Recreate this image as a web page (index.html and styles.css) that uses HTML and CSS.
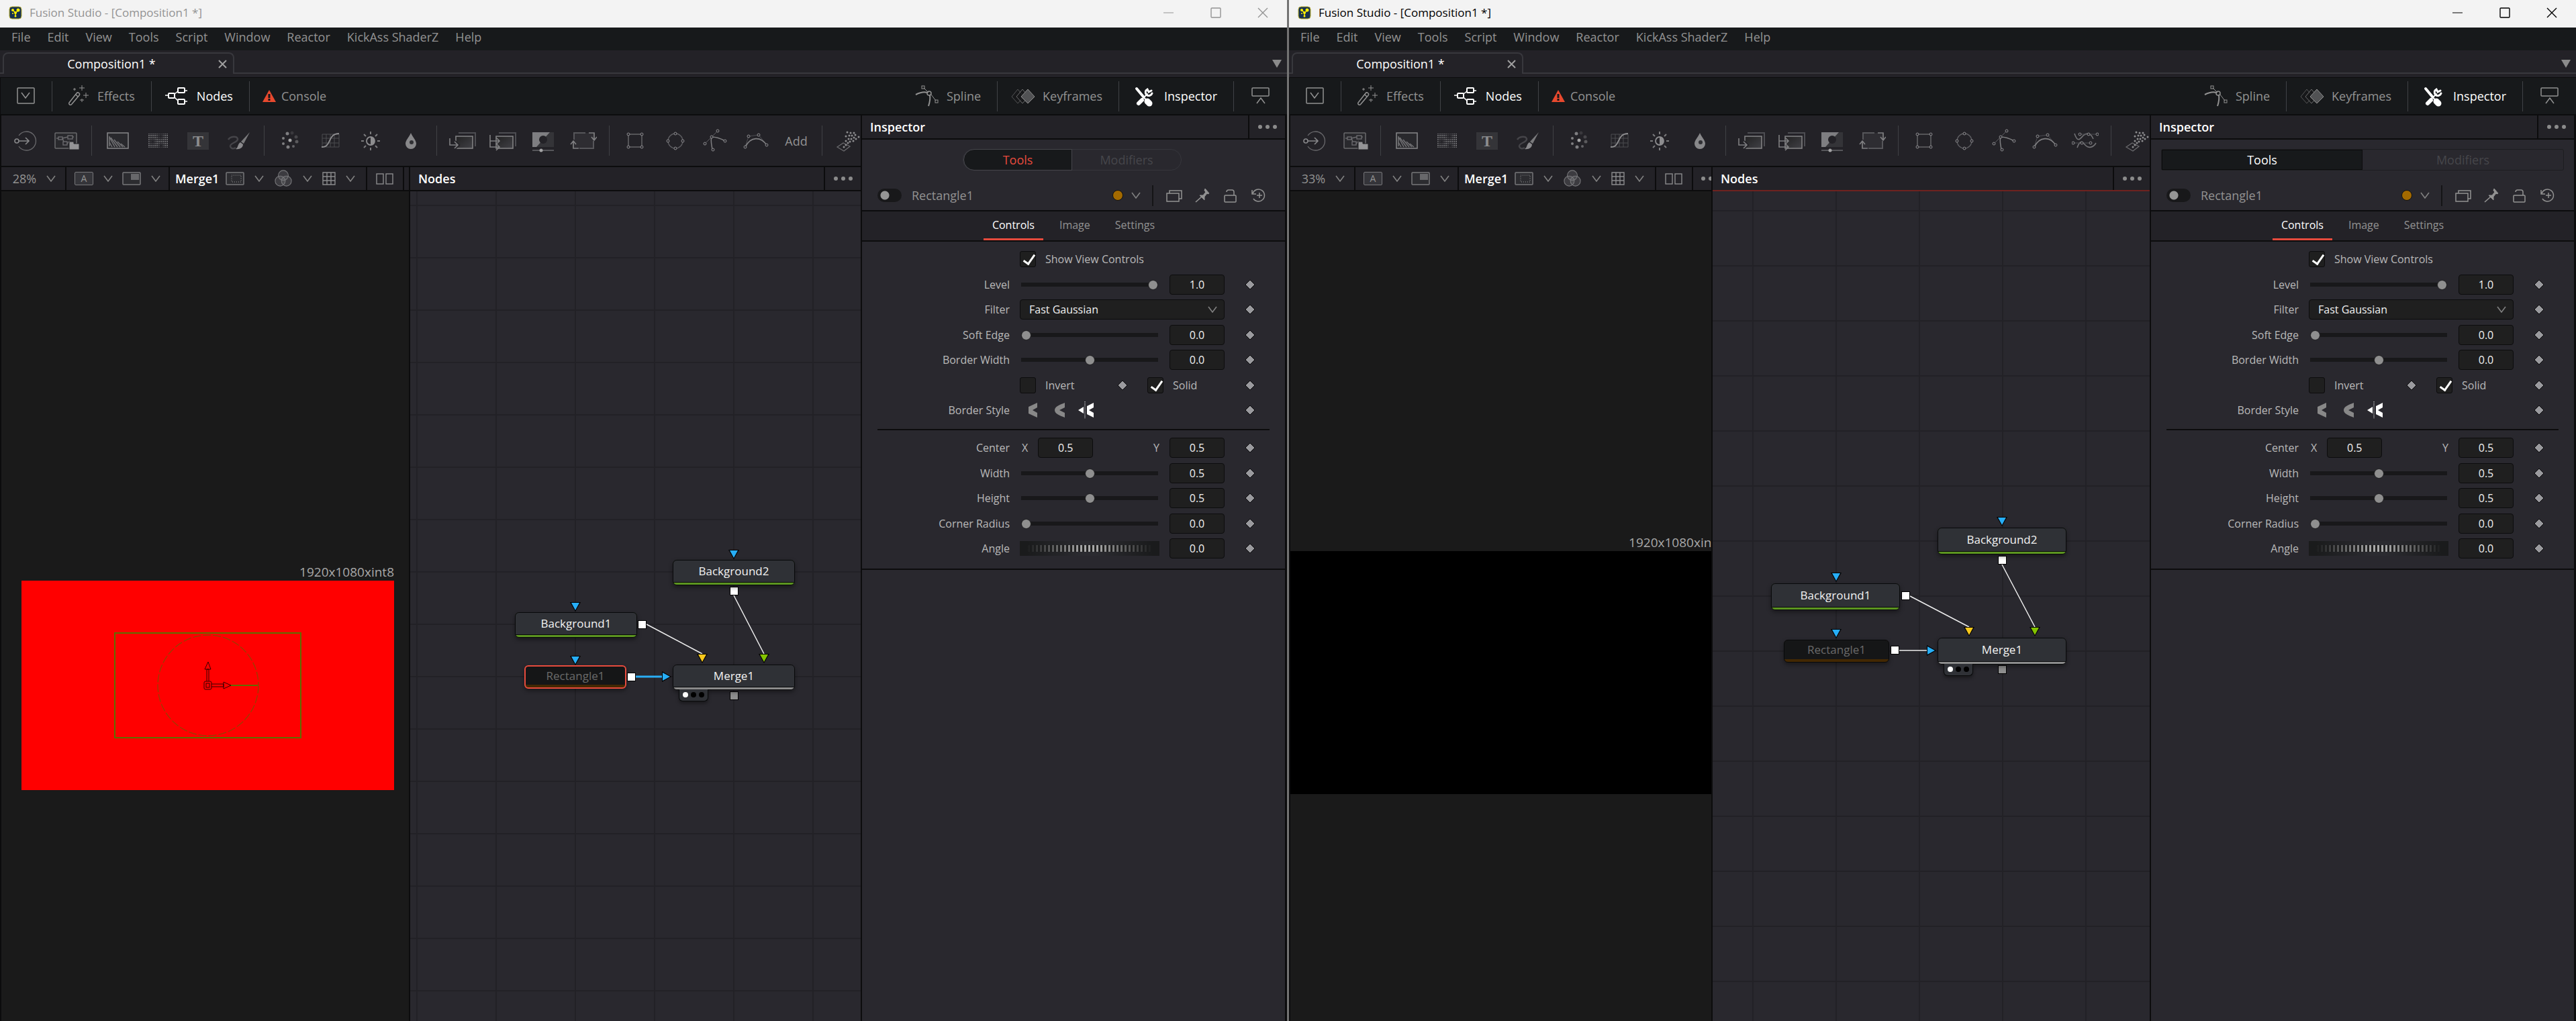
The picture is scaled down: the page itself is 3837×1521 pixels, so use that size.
FILE: index.html
```html
<!DOCTYPE html>
<html lang="en">
<head>
    <meta charset="UTF-8">
    <meta name="viewport" content="width=device-width, initial-scale=1.0">
    <title>Fusion Studio</title>
    <link rel="stylesheet" href="styles.css">
</head>
<body>
    <!-- icon sprite -->
    <svg class="sprite" aria-hidden="true">
        <defs>
            <linearGradient id="fade" x1="0" y1="0" x2="1" y2="1"><stop offset="0" stop-color="#222"/><stop offset="1" stop-color="#47474c"/></linearGradient>
            <pattern id="weave" width="3" height="3" patternUnits="userSpaceOnUse"><rect width="2" height="2" fill="#77777a"/></pattern>
            <radialGradient id="blob"><stop offset="0" stop-color="#232227"/><stop offset="1" stop-color="#232227" stop-opacity="0"/></radialGradient>
        </defs>
        <symbol id="i-app" viewBox="0 0 20 20"><rect x="1" y="1" width="18" height="18" rx="4" fill="#17324f" stroke="#b8ad2f"/><path d="M6 6l4 4 5-4M10 10v5" fill="none" stroke="#f4e800" stroke-width="1.5"/><g fill="#fff100"><circle cx="6" cy="6" r="2"/><circle cx="14" cy="6" r="2.5"/><circle cx="10" cy="10" r="2"/><circle cx="10" cy="15" r="1.5"/><circle cx="6" cy="11" r="1"/></g></symbol>
        <symbol id="i-min" viewBox="0 0 16 16"><path d="M0 8h15" stroke="currentColor" stroke-width="1"/></symbol>
        <symbol id="i-max" viewBox="0 0 16 16"><rect x="1" y="1" width="14" height="14" rx="1" fill="none" stroke="currentColor" stroke-width="1.4"/></symbol>
        <symbol id="i-close" viewBox="0 0 16 16"><path d="M1 1l14 14M15 1L1 15" stroke="currentColor" stroke-width="1.4"/></symbol>
        <symbol id="i-tab-close" viewBox="0 0 13 13"><path d="M1 1l11 11M12 1L1 12" stroke="currentColor" stroke-width="2"/></symbol>
        <symbol id="i-tri" viewBox="0 0 14 12"><path d="M0 0h14L7 12z" fill="currentColor"/></symbol>
        <symbol id="i-chev" viewBox="0 0 14 10"><path d="M1 1l6 8 6-8" fill="none" stroke="currentColor" stroke-width="1.6"/></symbol>
        <symbol id="i-dots" viewBox="0 0 28 8"><g fill="currentColor"><circle cx="3" cy="4" r="3"/><circle cx="14" cy="4" r="3"/><circle cx="25" cy="4" r="3"/></g></symbol>
        <symbol id="i-key" viewBox="0 0 16 16"><path d="M8 1l7 7-7 7-7-7z" fill="#9a9a9e" stroke="#0d0d0e" stroke-width="1"/></symbol>

        <symbol id="i-panel" viewBox="0 0 36 32"><rect x="5" y="4" width="25" height="23" rx="1" fill="none" stroke="currentColor" stroke-width="1.5"/><path d="M11 11l6 8 6-8" fill="none" stroke="currentColor" stroke-width="1.5"/></symbol>
        <symbol id="i-wand" viewBox="0 0 36 32"><path d="M5 26L16 12a2 2 0 0 1 4 3L9 28a2 2 0 0 1-4-2zM15 14l3 3" fill="none" stroke="currentColor" stroke-width="1.5"/><path d="M24 0v8M20 4h8M30 11v8M26 15h8M13 4v4M11 6h4M24 20v5M21 22h6" stroke="currentColor"/></symbol>
        <symbol id="i-nodes" viewBox="0 0 36 32"><g fill="none" stroke="currentColor" stroke-width="2"><rect x="5" y="12" width="9" height="7" rx="1"/><rect x="19" y="4" width="10" height="7" rx="1"/><rect x="19" y="21" width="10" height="7" rx="1"/><path d="M0 15h5M29 8h4M29 24h4M14 13l5-4M14 18l5 5" stroke-width="1.5"/></g></symbol>
        <symbol id="i-warn" viewBox="0 0 20 20"><path d="M10 1l10 18H0z" fill="#e8492e"/><path d="M10 7v6M10 14v3" stroke="#17181a" stroke-width="3"/></symbol>
        <symbol id="i-spline" viewBox="0 0 36 32"><g fill="none" stroke="currentColor"><path d="M1 14C7 11 12 9 18 11" stroke-width="2"/><path d="M20 31c2-6 3-10 2-16" stroke-width="2"/><path d="M13 4l7 7M24 14l7 9"/><rect x="10" y="1" width="4" height="4"/><rect x="30" y="22" width="4" height="4"/><circle cx="21" cy="12" r="3" stroke-width="1.5"/></g></symbol>
        <symbol id="i-keyframes" viewBox="0 0 36 32"><g fill="#17181a" stroke="currentColor"><path d="M10 6l9 11-9 10L1 17z" opacity=".5"/><path d="M17 6l9 11-9 10L8 17z" opacity=".7"/></g><path d="M25 6l10 11-10 10-10-10z" fill="#515254" stroke="currentColor"/></symbol>
        <symbol id="i-inspector" viewBox="0 0 36 32"><g fill="none" stroke="currentColor" stroke-linecap="round"><path d="M6 5l10 12" stroke-width="4"/><path d="M9 27l5-5" stroke-width="6"/><path d="M14 21l8-8" stroke-width="2"/><path d="M28 8l-4 2-2-4a5 5 0 1 0 7 6" stroke-width="3"/><path d="M22 24l3 3" stroke-width="9"/><path d="M16 17l5 6" stroke-width="2"/></g></symbol>
        <symbol id="i-float" viewBox="0 0 36 32"><rect x="5" y="4" width="25" height="12" rx="1" fill="none" stroke="currentColor" stroke-width="1.5"/><path d="M12 27l6-8 6 8" fill="none" stroke="currentColor" stroke-width="1.5"/></symbol>

        <symbol id="t-loader" viewBox="0 0 40 36"><g fill="none" stroke="#77777a" stroke-width="1.3"><path d="M10 10a14 14 0 1 1 0 16"/></g><g fill="none" stroke="#9a9a9c" stroke-width="1.6"><circle cx="7" cy="18" r="3"/><path d="M10 18h15M20 13l5 5-5 5"/></g></symbol>
        <symbol id="t-saver" viewBox="0 0 40 36"><rect x="4" y="6" width="32" height="23" rx="1" fill="#2b2b2f" stroke="#77777a" stroke-width="1.5"/><g fill="none" stroke="#77777a" stroke-width="1.4"><rect x="9" y="12" width="6" height="4"/><rect x="23" y="10" width="7" height="5"/><rect x="16" y="19" width="6" height="5"/><path d="M6 14h3M15 14l2 5M15 14l8-2M22 22l4-4M30 12h2"/></g><path d="M25 19h7v3h8v9H25z" fill="#a8a8aa" stroke="#232227"/></symbol>
        <symbol id="t-bg" viewBox="0 0 40 36"><rect x="5" y="6" width="31" height="23" fill="#2b2b2f" stroke="#9a9a9c" stroke-width="1.5"/><path d="M8 26V11M8 12l8 15M8 20l4 7M10 13l10 14M15 16l9 11M20 19l8 8M25 22l6 5" fill="none" stroke="#808083" stroke-width="1.5"/></symbol>
        <symbol id="t-noise" viewBox="0 0 40 36"><rect x="6" y="7" width="29" height="21" fill="url(#weave)"/><circle cx="24" cy="11" r="7" fill="url(#blob)"/><circle cx="12" cy="19" r="7" fill="url(#blob)"/><circle cx="25" cy="25" r="6" fill="url(#blob)"/></symbol>
        <symbol id="t-paint" viewBox="0 0 40 36"><path d="M5 16c3-5 13-6 14-1 1 5-12 6-11 11 1 4 5 4 8 2" fill="none" stroke="#4b4b4f" stroke-width="2.5"/><path d="M37 5L28 22l-4-3z" fill="#8b8b8d"/><path d="M23 20l4 3c0 5-5 8-11 7 4-2 3-8 7-10z" fill="#9c9c9e"/></symbol>
        <symbol id="t-particles" viewBox="0 0 40 36"><g fill="#8f8f91"><circle cx="20" cy="17" r="2.5" fill="#bbb"/><circle cx="16" cy="7" r="2.5"/><circle cx="10" cy="14" r="2"/><circle cx="10" cy="22" r="2"/><circle cx="17" cy="27" r="2.5"/><circle cx="25" cy="26" r="2" opacity=".7"/><circle cx="30" cy="19" r="2.5" opacity=".6"/><circle cx="29" cy="12" r="2.5" opacity=".4"/><circle cx="23" cy="6" r="2.5" opacity=".25"/></g></symbol>
        <symbol id="t-curve" viewBox="0 0 40 36"><path d="M8 8h25v19H8zM14 8v19M20 8v19M26 8v19M8 14h25M8 21h25" fill="none" stroke="#555559"/><path d="M7 27c16 0 8-20 26-20" fill="none" stroke="#a0a0a2" stroke-width="1.8"/></symbol>
        <symbol id="t-bright" viewBox="0 0 40 36"><circle cx="20" cy="18" r="6" fill="#232227" stroke="#a0a0a2" stroke-width="1.8"/><path d="M20 12a6 6 0 0 1 0 12z" fill="#a0a0a2"/><path d="M20 4v4M20 28v4M30 18h4M27 11l3-3M27 25l3 3M13 11l-3-3M13 25l-3 3M10 18H6" stroke="#8b8b8d" stroke-width="2"/></symbol>
        <symbol id="t-blur" viewBox="0 0 40 36"><path d="M20 6c3 7 8 11 8 16a8 8 0 0 1-16 0c0-5 5-9 8-16z" fill="#9a9a9c"/><circle cx="21" cy="20" r="3" fill="#333337"/></symbol>
        <symbol id="t-merge" viewBox="0 0 40 36"><path d="M14 6h25v20" fill="none" stroke="#55555a" stroke-width="2"/><rect x="10" y="11" width="25" height="18" fill="url(#fade)" stroke="#909092" stroke-width="1.6"/><path d="M1 15v9h12M8 19l5 5-5 5" fill="none" stroke="#232227" stroke-width="5"/><path d="M1 14v10h12M8 19l5 5-5 5" fill="none" stroke="#909092" stroke-width="1.6"/></symbol>
        <symbol id="t-multimerge" viewBox="0 0 40 36"><path d="M14 6h25v20" fill="none" stroke="#55555a" stroke-width="2"/><rect x="10" y="11" width="25" height="18" fill="url(#fade)" stroke="#909092" stroke-width="1.6"/><path d="M1 9v18h14M1 18h14M10 13l5 5-5 5M10 22l5 5-5 5" fill="none" stroke="#909092" stroke-width="1.6"/></symbol>
        <symbol id="t-matte" viewBox="0 0 40 36"><rect x="4" y="5" width="32" height="22" fill="#38383c"/><path d="M4 5h26L10 27H4z" fill="#8f8f91"/><circle cx="20" cy="16" r="6" fill="#232227"/><path d="M4 32h32" stroke="#606064" stroke-width="2"/><circle cx="17" cy="32" r="2.5" fill="#bbb"/></symbol>
        <symbol id="t-transform" viewBox="0 0 40 36"><rect x="6" y="6" width="29" height="23" fill="#303034"/><path d="M6 16V6h17M14 29h21V18" fill="none" stroke="#606064" stroke-width="2"/><path d="M28 6h8v11M32 12l4 5 4-5M13 29H5V18M1 23l4-5 4 5" fill="none" stroke="#909092" stroke-width="1.7"/></symbol>
        <symbol id="t-rect" viewBox="0 0 40 36"><rect x="10" y="8" width="20" height="19" fill="none" stroke="#77777a" stroke-width="1.4"/><g fill="#232227" stroke="#a0a0a2"><circle cx="10" cy="8" r="2"/><circle cx="30" cy="8" r="2"/><circle cx="10" cy="27" r="2"/><circle cx="30" cy="27" r="2"/></g></symbol>
        <symbol id="t-ellipse" viewBox="0 0 40 36"><circle cx="20" cy="18" r="11" fill="none" stroke="#66666a" stroke-width="1.4"/><g fill="#232227" stroke="#a0a0a2"><circle cx="20" cy="7" r="2"/><circle cx="31" cy="18" r="2"/><circle cx="20" cy="29" r="2"/><circle cx="9" cy="18" r="2"/></g></symbol>
        <symbol id="t-poly" viewBox="0 0 40 36"><path d="M4 22l10-10 9-9" stroke="#66666a"/><path d="M15 31c-1-8-3-14-1-19 6 0 13 2 20 6" fill="none" stroke="#909092" stroke-width="1.5"/><g fill="#232227" stroke="#a0a0a2"><circle cx="4" cy="22" r="2"/><circle cx="14" cy="12" r="2"/><circle cx="23" cy="3" r="2"/><circle cx="34" cy="18" r="2"/><circle cx="16" cy="31" r="2"/></g></symbol>
        <symbol id="t-bspline" viewBox="0 0 40 36"><path d="M4 27L9 11l15-2 12 15" fill="none" stroke="#55555a"/><path d="M4 27c8-16 23-16 32-3" fill="none" stroke="#909092" stroke-width="1.7"/><g fill="#232227" stroke="#a0a0a2"><circle cx="4" cy="27" r="2"/><circle cx="9" cy="11" r="2"/><circle cx="24" cy="9" r="2"/><circle cx="36" cy="24" r="2"/></g></symbol>
        <symbol id="t-wave" viewBox="0 0 40 36"><path d="M4 7c5 15 9 7 13 3s11-5 15 5M8 28c5-14 9-7 13-3s11 3 15-4" fill="none" stroke="#808083" stroke-width="1.6"/><path d="M12 8h27M2 21h27" stroke="#55555a"/><g fill="#232227" stroke="#a0a0a2"><circle cx="12" cy="8" r="2"/><circle cx="25" cy="8" r="2"/><circle cx="38" cy="8" r="2"/><circle cx="2" cy="21" r="2"/><circle cx="15" cy="21" r="2"/><circle cx="28" cy="21" r="2"/></g></symbol>
        <symbol id="t-emitter" viewBox="0 0 40 36"><path d="M4 27l9-6 10 5-9 7z" fill="none" stroke="#77777a" stroke-width="1.3"/><g fill="#a0a0a2"><circle cx="14" cy="27" r="1.500"/><circle cx="17" cy="24" r="1.500"/><circle cx="20" cy="21" r="1.500"/><circle cx="17" cy="18" r="1.500"/><circle cx="23" cy="19" r="1.500"/><circle cx="21" cy="15" r="1.500"/><circle cx="25" cy="15" r="1.500"/><circle cx="17" cy="11" r="1.500"/><circle cx="22" cy="10" r="1.500"/><circle cx="26" cy="10" r="1.500"/><circle cx="29" cy="13" r="1.500"/><circle cx="31" cy="9" r="1.500"/><circle cx="19" cy="5" r="1.500"/><circle cx="24" cy="6" r="1.500"/><circle cx="29" cy="6" r="1.500"/><circle cx="28" cy="18" r="1.500"/><circle cx="32" cy="15" r="1.500"/><circle cx="36" cy="12" r="1.500"/></g></symbol>

        <symbol id="v-sub" viewBox="0 0 28 20"><rect x="1" y="1" width="26" height="18" rx="1" fill="#2c2c30" stroke="#77777a" stroke-width="1.5"/><rect x="13" y="3" width="12" height="9" fill="#68686b"/></symbol>
        <symbol id="v-roi" viewBox="0 0 28 20"><rect x="1" y="1" width="26" height="18" rx="1" fill="#2c2c30" stroke="#77777a" stroke-width="1.5"/><rect x="9" y="5" width="14" height="10" fill="none" stroke="#99999b" stroke-dasharray="1 2"/></symbol>
        <symbol id="v-rgb" viewBox="0 0 28 28"><g fill="#77777a" fill-opacity=".3" stroke="#77777a" stroke-width="1.2"><circle cx="14" cy="9" r="8"/><circle cx="9" cy="18" r="8"/><circle cx="19" cy="18" r="8"/></g></symbol>
        <symbol id="v-grid" viewBox="0 0 20 20"><path d="M1 1h18v18H1zM7 1v18M13 1v18M1 7h18M1 13h18" fill="none" stroke="#8b8b8d" stroke-width="1.4"/></symbol>
        <symbol id="v-split" viewBox="0 0 28 20"><g fill="none" stroke="#8b8b8d" stroke-width="1.4"><rect x="2" y="3" width="10" height="15"/><rect x="16" y="3" width="10" height="15"/></g></symbol>

        <symbol id="n-versions" viewBox="0 0 24 24"><path d="M1 9h18v12H1zM5 9V5h18v12h-4" fill="none" stroke="currentColor" stroke-width="1.5"/></symbol>
        <symbol id="n-pin" viewBox="0 0 24 24"><path d="M16 2l6 7-2 1-1-1-4 5 0 5-7-7 5 0 4-5-2-2z" fill="currentColor" stroke="currentColor" stroke-linejoin="round"/><path d="M11 14l-9 8" stroke="currentColor" stroke-width="1.6"/></symbol>
        <symbol id="n-lock" viewBox="0 0 24 24"><rect x="3" y="12" width="17" height="10" rx="1" fill="none" stroke="currentColor" stroke-width="1.5"/><path d="M6 7c0-2 1-3 3-3h5c2 0 3 1 3 3v5" fill="none" stroke="currentColor" stroke-width="1.5"/></symbol>
        <symbol id="n-reset" viewBox="0 0 24 24"><path d="M3 9a9 9 0 1 1 1 8M2 4v6h6M9 12h8M13 8v8" fill="none" stroke="currentColor" stroke-width="1.5"/></symbol>
        <symbol id="b-in" viewBox="0 0 20 26"><path d="M16 2v7l-7 4 7 4v7L3 18V8z" fill="currentColor"/></symbol>
        <symbol id="b-mid" viewBox="0 0 20 26"><path d="M17 2v7l-8 4 8 4v7C9 21 2 18 2 13S9 5 17 2z" fill="currentColor"/></symbol>
        <symbol id="b-out" viewBox="0 0 24 26"><path d="M24 2v7l-7 4 7 4v7l-10-5V7zM9 8v10l-8-5z" fill="currentColor"/><path d="M11 0v26" stroke="currentColor" stroke-dasharray="1 1"/></symbol>

        <symbol id="p-down" viewBox="0 0 16 14"><path d="M0 0h16L8 14z"/><path d="M2 1h12L8 12z" fill="currentColor"/></symbol>
        <symbol id="p-right" viewBox="0 0 14 16"><path d="M0 0v16l14-8z"/><path d="M1 2v12l11-6z" fill="currentColor"/></symbol>
        <symbol id="p-out" viewBox="0 0 13 13"><path d="M0 0h13v13H0z"/><path d="M1 1h11v11H1z" fill="currentColor"/></symbol>
    </svg>

    <div class="desktop">
        <section class="window inactive">
            <header class="title-bar">
                <svg class="app-icon"><use href="#i-app"/></svg>
                <h1>Fusion Studio - [Composition1 *]</h1>
                <button class="win-btn" aria-label="Minimize"><svg><use href="#i-min"/></svg></button>
                <button class="win-btn" aria-label="Maximize"><svg><use href="#i-max"/></svg></button>
                <button class="win-btn" aria-label="Close"><svg><use href="#i-close"/></svg></button>
            </header>
            <nav class="menu-bar">
                <a href="#">File</a><a href="#">Edit</a><a href="#">View</a><a href="#">Tools</a><a href="#">Script</a><a href="#">Window</a><a href="#">Reactor</a><a href="#">KickAss ShaderZ</a><a href="#">Help</a>
            </nav>
            <div class="tab-bar">
                <div class="doc-tab"><span>Composition1 *</span><button class="tab-close" aria-label="Close tab"><svg><use href="#i-tab-close"/></svg></button></div>
                <button class="tab-list" aria-label="Tab list"><svg><use href="#i-tri"/></svg></button>
            </div>
            <div class="page-bar">
                <button class="page-btn only-icon" aria-label="Layout"><svg><use href="#i-panel"/></svg></button>
                <button class="page-btn"><svg><use href="#i-wand"/></svg>Effects</button>
                <button class="page-btn on"><svg><use href="#i-nodes"/></svg>Nodes</button>
                <button class="page-btn"><svg class="warn"><use href="#i-warn"/></svg>Console</button>
                <span class="spacer"></span>
                <button class="page-btn"><svg><use href="#i-spline"/></svg>Spline</button>
                <button class="page-btn"><svg><use href="#i-keyframes"/></svg>Keyframes</button>
                <button class="page-btn on"><svg><use href="#i-inspector"/></svg>Inspector</button>
                <button class="page-btn only-icon float" aria-label="Float"><svg><use href="#i-float"/></svg></button>
            </div>
            <main class="workspace">
                <div class="left-side">
                    <div class="tool-row">
                        <button aria-label="Loader"><svg><use href="#t-loader"/></svg></button>
                        <button aria-label="Saver"><svg><use href="#t-saver"/></svg></button>
                        <i class="sep"></i>
                        <button aria-label="Background"><svg><use href="#t-bg"/></svg></button>
                        <button aria-label="Fast Noise"><svg><use href="#t-noise"/></svg></button>
                        <button aria-label="Text"><span class="text-icon">T</span></button>
                        <button aria-label="Paint"><svg><use href="#t-paint"/></svg></button>
                        <i class="sep"></i>
                        <button aria-label="Tracker"><svg><use href="#t-particles"/></svg></button>
                        <button aria-label="Color Curves"><svg><use href="#t-curve"/></svg></button>
                        <button aria-label="Brightness"><svg><use href="#t-bright"/></svg></button>
                        <button aria-label="Blur"><svg><use href="#t-blur"/></svg></button>
                        <i class="sep"></i>
                        <button aria-label="Merge"><svg><use href="#t-merge"/></svg></button>
                        <button aria-label="MultiMerge"><svg><use href="#t-multimerge"/></svg></button>
                        <button aria-label="Matte Control"><svg><use href="#t-matte"/></svg></button>
                        <button aria-label="Transform"><svg><use href="#t-transform"/></svg></button>
                        <i class="sep"></i>
                        <button aria-label="Rectangle"><svg><use href="#t-rect"/></svg></button>
                        <button aria-label="Ellipse"><svg><use href="#t-ellipse"/></svg></button>
                        <button aria-label="Polygon"><svg><use href="#t-poly"/></svg></button>
                        <button aria-label="BSpline"><svg><use href="#t-bspline"/></svg></button>
                        <button>Add</button>
                        <i class="sep"></i>
                        <button aria-label="pEmitter"><svg><use href="#t-emitter"/></svg></button>
                    </div>
                    <div class="panes">
                        <section class="viewer">
                            <div class="view-bar">
                                <button class="zoom">28%<svg class="chev"><use href="#i-chev"/></svg></button>
                                <div class="view-group first">
                                    <button aria-label="Buffer"><span class="buffer-icon">A</span><svg class="chev"><use href="#i-chev"/></svg></button>
                                    <button aria-label="Sub view"><svg><use href="#v-sub"/></svg><svg class="chev"><use href="#i-chev"/></svg></button>
                                </div>
                                <div class="view-group main">
                                    <strong>Merge1</strong>
                                    <button aria-label="Region"><svg><use href="#v-roi"/></svg><svg class="chev"><use href="#i-chev"/></svg></button>
                                    <button aria-label="Channels"><svg class="tall"><use href="#v-rgb"/></svg><svg class="chev"><use href="#i-chev"/></svg></button>
                                    <button aria-label="Guides"><svg class="square"><use href="#v-grid"/></svg><svg class="chev"><use href="#i-chev"/></svg></button>
                                </div>
                                <div class="view-group split"><button aria-label="Split view"><svg><use href="#v-split"/></svg></button></div>
                                <div class="view-group"></div>
                            </div>
                            <div class="stage">
                                <figure class="frame red">
                                    <figcaption>1920x1080xint8</figcaption>
                                    <svg viewBox="0 0 555 312">
                                        <rect x="139" y="78" width="277" height="156" fill="none" stroke="#5c7000" stroke-width="2"/>
                                        <circle cx="278" cy="156" r="75" fill="none" stroke="#964000" stroke-width="1.3" stroke-dasharray="12 3"/>
                                        <path d="M311 156h41" stroke="#5c7000" stroke-width="2"/>
                                        <g fill="none" stroke="#300"><rect x="272" y="150" width="11" height="12" rx="2"/><rect x="275" y="153" width="5" height="6"/><path d="M276 150v-18h3v18M273 132l5-11 4 11zM283 154h18v4h-18M301 151l11 5-11 5z"/></g>
                                    </svg>
                                </figure>
                            </div>
                        </section>
                        <section class="nodes">
                            <div class="pane-head"><h2>Nodes</h2><button class="more" aria-label="Nodes options"><svg><use href="#i-dots"/></svg></button></div>
                            <div class="canvas">
                                <svg class="wires">
                                    <path d="M352 645l83 44M482 602l45 87" stroke="#eee" stroke-width="1.5"/>
                                    <path d="M336 723h40" stroke="#2aaef5" stroke-width="3"/>
                                    <g color="#27aef7"><use href="#p-down" x="474" y="534" width="16" height="14"/><use href="#p-down" x="238" y="612" width="16" height="14"/><use href="#p-down" x="238" y="692" width="16" height="14"/><use href="#p-right" x="375" y="715" width="14" height="16"/></g>
                                    <use href="#p-down" x="427" y="689" width="16" height="14" color="#f8c81c"/>
                                    <use href="#p-down" x="519" y="689" width="16" height="14" color="#83c200"/>
                                    <g color="#fff"><use href="#p-out" x="476" y="589" width="13" height="13"/><use href="#p-out" x="339" y="639" width="13" height="13"/></g>
                                    <use href="#p-out" x="476" y="745" width="13" height="13" color="#8e8e8e"/>
                                </svg>
                                <div class="node background2">Background2</div>
                                <div class="node background1">Background1</div>
                                <div class="node mask rectangle1 selected">Rectangle1</div>
                                <div class="node merge merge1">Merge1<span class="view-dots"><b></b><b></b><b></b></span></div>
                                <svg class="wires"><use href="#p-out" x="323" y="717" width="13" height="13" color="#fff"/></svg>
                            </div>
                        </section>
                    </div>
                </div>
                <aside class="inspector">
                    <div class="pane-head"><h2>Inspector</h2><button class="more" aria-label="Inspector options"><svg><use href="#i-dots"/></svg></button></div>
                    <div class="switcher pill"><button class="on">Tools</button><button>Modifiers</button></div>
                    <div class="tool-head">
                        <input type="checkbox" class="toggle" id="a-enable" checked><label for="a-enable">Rectangle1</label>
                        <i class="swatch"></i><svg class="chev"><use href="#i-chev"/></svg>
                        <div class="head-icons">
                            <button aria-label="Versions"><svg><use href="#n-versions"/></svg></button>
                            <button aria-label="Pin"><svg><use href="#n-pin"/></svg></button>
                            <button aria-label="Lock"><svg><use href="#n-lock"/></svg></button>
                            <button aria-label="Reset"><svg><use href="#n-reset"/></svg></button>
                        </div>
                    </div>
                    <div class="sub-tabs"><button class="on">Controls</button><button>Image</button><button>Settings</button></div>
                    <form class="controls">
                        <div class="row show"><div class="checks"><input type="checkbox" id="a-show" checked><label for="a-show">Show View Controls</label></div></div>
                        <div class="row"><label for="a-level">Level</label><input type="range" id="a-level" value="100"><input type="text" value="1.0" aria-label="Level value"><svg class="key"><use href="#i-key"/></svg></div>
                        <div class="row"><label for="a-filter">Filter</label><div class="drop"><select id="a-filter"><option>Fast Gaussian</option></select><svg class="chev"><use href="#i-chev"/></svg></div><svg class="key"><use href="#i-key"/></svg></div>
                        <div class="row"><label for="a-soft">Soft Edge</label><input type="range" id="a-soft" value="0"><input type="text" value="0.0" aria-label="Soft Edge value"><svg class="key"><use href="#i-key"/></svg></div>
                        <div class="row"><label for="a-border">Border Width</label><input type="range" id="a-border" value="50"><input type="text" value="0.0" aria-label="Border Width value"><svg class="key"><use href="#i-key"/></svg></div>
                        <div class="row"><div class="checks"><input type="checkbox" id="a-invert"><label for="a-invert">Invert</label><svg class="key mid"><use href="#i-key"/></svg><input type="checkbox" id="a-solid" checked><label for="a-solid">Solid</label></div><svg class="key"><use href="#i-key"/></svg></div>
                        <div class="row"><span class="label">Border Style</span><div class="styles"><button type="button" aria-label="Inside"><svg><use href="#b-in"/></svg></button><button type="button" aria-label="Centered"><svg><use href="#b-mid"/></svg></button><button type="button" class="on" aria-label="Outside"><svg><use href="#b-out"/></svg></button></div><svg class="key"><use href="#i-key"/></svg></div>
                        <hr>
                        <div class="row"><span class="label">Center</span><div class="pair"><label for="a-x">X</label><input type="text" id="a-x" value="0.5"><label for="a-y">Y</label></div><input type="text" id="a-y" value="0.5"><svg class="key"><use href="#i-key"/></svg></div>
                        <div class="row"><label for="a-width">Width</label><input type="range" id="a-width" value="50"><input type="text" value="0.5" aria-label="Width value"><svg class="key"><use href="#i-key"/></svg></div>
                        <div class="row"><label for="a-height">Height</label><input type="range" id="a-height" value="50"><input type="text" value="0.5" aria-label="Height value"><svg class="key"><use href="#i-key"/></svg></div>
                        <div class="row"><label for="a-corner">Corner Radius</label><input type="range" id="a-corner" value="0"><input type="text" value="0.0" aria-label="Corner Radius value"><svg class="key"><use href="#i-key"/></svg></div>
                        <div class="row"><label for="a-angle">Angle</label><div class="wheel"></div><input type="text" id="a-angle" value="0.0"><svg class="key"><use href="#i-key"/></svg></div>
                    </form>
                </aside>
            </main>
        </section>

        <section class="window active">
            <header class="title-bar">
                <svg class="app-icon"><use href="#i-app"/></svg>
                <h1>Fusion Studio - [Composition1 *]</h1>
                <button class="win-btn" aria-label="Minimize"><svg><use href="#i-min"/></svg></button>
                <button class="win-btn" aria-label="Maximize"><svg><use href="#i-max"/></svg></button>
                <button class="win-btn" aria-label="Close"><svg><use href="#i-close"/></svg></button>
            </header>
            <nav class="menu-bar">
                <a href="#">File</a><a href="#">Edit</a><a href="#">View</a><a href="#">Tools</a><a href="#">Script</a><a href="#">Window</a><a href="#">Reactor</a><a href="#">KickAss ShaderZ</a><a href="#">Help</a>
            </nav>
            <div class="tab-bar">
                <div class="doc-tab"><span>Composition1 *</span><button class="tab-close" aria-label="Close tab"><svg><use href="#i-tab-close"/></svg></button></div>
                <button class="tab-list" aria-label="Tab list"><svg><use href="#i-tri"/></svg></button>
            </div>
            <div class="page-bar">
                <button class="page-btn only-icon" aria-label="Layout"><svg><use href="#i-panel"/></svg></button>
                <button class="page-btn"><svg><use href="#i-wand"/></svg>Effects</button>
                <button class="page-btn on"><svg><use href="#i-nodes"/></svg>Nodes</button>
                <button class="page-btn"><svg class="warn"><use href="#i-warn"/></svg>Console</button>
                <span class="spacer"></span>
                <button class="page-btn"><svg><use href="#i-spline"/></svg>Spline</button>
                <button class="page-btn"><svg><use href="#i-keyframes"/></svg>Keyframes</button>
                <button class="page-btn on"><svg><use href="#i-inspector"/></svg>Inspector</button>
                <button class="page-btn only-icon float" aria-label="Float"><svg><use href="#i-float"/></svg></button>
            </div>
            <main class="workspace">
                <div class="left-side">
                    <div class="tool-row">
                        <button aria-label="Loader"><svg><use href="#t-loader"/></svg></button>
                        <button aria-label="Saver"><svg><use href="#t-saver"/></svg></button>
                        <i class="sep"></i>
                        <button aria-label="Background"><svg><use href="#t-bg"/></svg></button>
                        <button aria-label="Fast Noise"><svg><use href="#t-noise"/></svg></button>
                        <button aria-label="Text"><span class="text-icon">T</span></button>
                        <button aria-label="Paint"><svg><use href="#t-paint"/></svg></button>
                        <i class="sep"></i>
                        <button aria-label="Tracker"><svg><use href="#t-particles"/></svg></button>
                        <button aria-label="Color Curves"><svg><use href="#t-curve"/></svg></button>
                        <button aria-label="Brightness"><svg><use href="#t-bright"/></svg></button>
                        <button aria-label="Blur"><svg><use href="#t-blur"/></svg></button>
                        <i class="sep"></i>
                        <button aria-label="Merge"><svg><use href="#t-merge"/></svg></button>
                        <button aria-label="MultiMerge"><svg><use href="#t-multimerge"/></svg></button>
                        <button aria-label="Matte Control"><svg><use href="#t-matte"/></svg></button>
                        <button aria-label="Transform"><svg><use href="#t-transform"/></svg></button>
                        <i class="sep"></i>
                        <button aria-label="Rectangle"><svg><use href="#t-rect"/></svg></button>
                        <button aria-label="Ellipse"><svg><use href="#t-ellipse"/></svg></button>
                        <button aria-label="Polygon"><svg><use href="#t-poly"/></svg></button>
                        <button aria-label="BSpline"><svg><use href="#t-bspline"/></svg></button>
                        <button aria-label="MultiPoly"><svg><use href="#t-wave"/></svg></button>
                        <i class="sep"></i>
                        <button aria-label="pEmitter"><svg><use href="#t-emitter"/></svg></button>
                    </div>
                    <div class="panes wide">
                        <section class="viewer">
                            <div class="view-bar">
                                <button class="zoom">33%<svg class="chev"><use href="#i-chev"/></svg></button>
                                <div class="view-group first">
                                    <button aria-label="Buffer"><span class="buffer-icon">A</span><svg class="chev"><use href="#i-chev"/></svg></button>
                                    <button aria-label="Sub view"><svg><use href="#v-sub"/></svg><svg class="chev"><use href="#i-chev"/></svg></button>
                                </div>
                                <div class="view-group main">
                                    <strong>Merge1</strong>
                                    <button aria-label="Region"><svg><use href="#v-roi"/></svg><svg class="chev"><use href="#i-chev"/></svg></button>
                                    <button aria-label="Channels"><svg class="tall"><use href="#v-rgb"/></svg><svg class="chev"><use href="#i-chev"/></svg></button>
                                    <button aria-label="Guides"><svg class="square"><use href="#v-grid"/></svg><svg class="chev"><use href="#i-chev"/></svg></button>
                                </div>
                                <div class="view-group split"><button aria-label="Split view"><svg><use href="#v-split"/></svg></button></div>
                                <button class="more" aria-label="Viewer options"><svg><use href="#i-dots"/></svg></button>
                            </div>
                            <div class="stage">
                                <figure class="frame black">
                                    <figcaption>1920x1080xint8</figcaption>
                                </figure>
                            </div>
                        </section>
                        <section class="nodes focused">
                            <div class="pane-head"><h2>Nodes</h2><button class="more" aria-label="Nodes options"><svg><use href="#i-dots"/></svg></button></div>
                            <div class="canvas">
                                <svg class="wires">
                                    <path d="M294 603l88 46M431 556l49 93M278 684h41" stroke="#eee" stroke-width="1.5"/>
                                    <g color="#27aef7"><use href="#p-down" x="423" y="485" width="16" height="14"/><use href="#p-down" x="176" y="568" width="16" height="14"/><use href="#p-down" x="176" y="652" width="16" height="14"/><use href="#p-right" x="319" y="676" width="14" height="16"/></g>
                                    <use href="#p-down" x="374" y="649" width="16" height="14" color="#f8c81c"/>
                                    <use href="#p-down" x="472" y="649" width="16" height="14" color="#83c200"/>
                                    <g color="#fff"><use href="#p-out" x="425" y="543" width="13" height="13"/><use href="#p-out" x="281" y="596" width="13" height="13"/><use href="#p-out" x="265" y="677" width="13" height="13"/></g>
                                    <use href="#p-out" x="425" y="706" width="13" height="13" color="#8e8e8e"/>
                                </svg>
                                <div class="node background2">Background2</div>
                                <div class="node background1">Background1</div>
                                <div class="node mask rectangle1">Rectangle1</div>
                                <div class="node merge merge1">Merge1<span class="view-dots"><b></b><b></b><b></b></span></div>
                            </div>
                        </section>
                    </div>
                </div>
                <aside class="inspector">
                    <div class="pane-head"><h2>Inspector</h2><button class="more" aria-label="Inspector options"><svg><use href="#i-dots"/></svg></button></div>
                    <div class="switcher"><button class="on">Tools</button><button>Modifiers</button></div>
                    <div class="tool-head">
                        <input type="checkbox" class="toggle" id="b-enable" checked><label for="b-enable">Rectangle1</label>
                        <i class="swatch"></i><svg class="chev"><use href="#i-chev"/></svg>
                        <div class="head-icons">
                            <button aria-label="Versions"><svg><use href="#n-versions"/></svg></button>
                            <button aria-label="Pin"><svg><use href="#n-pin"/></svg></button>
                            <button aria-label="Lock"><svg><use href="#n-lock"/></svg></button>
                            <button aria-label="Reset"><svg><use href="#n-reset"/></svg></button>
                        </div>
                    </div>
                    <div class="sub-tabs"><button class="on">Controls</button><button>Image</button><button>Settings</button></div>
                    <form class="controls">
                        <div class="row show"><div class="checks"><input type="checkbox" id="b-show" checked><label for="b-show">Show View Controls</label></div></div>
                        <div class="row"><label for="b-level">Level</label><input type="range" id="b-level" value="100"><input type="text" value="1.0" aria-label="Level value"><svg class="key"><use href="#i-key"/></svg></div>
                        <div class="row"><label for="b-filter">Filter</label><div class="drop"><select id="b-filter"><option>Fast Gaussian</option></select><svg class="chev"><use href="#i-chev"/></svg></div><svg class="key"><use href="#i-key"/></svg></div>
                        <div class="row"><label for="b-soft">Soft Edge</label><input type="range" id="b-soft" value="0"><input type="text" value="0.0" aria-label="Soft Edge value"><svg class="key"><use href="#i-key"/></svg></div>
                        <div class="row"><label for="b-border">Border Width</label><input type="range" id="b-border" value="50"><input type="text" value="0.0" aria-label="Border Width value"><svg class="key"><use href="#i-key"/></svg></div>
                        <div class="row"><div class="checks"><input type="checkbox" id="b-invert"><label for="b-invert">Invert</label><svg class="key mid"><use href="#i-key"/></svg><input type="checkbox" id="b-solid" checked><label for="b-solid">Solid</label></div><svg class="key"><use href="#i-key"/></svg></div>
                        <div class="row"><span class="label">Border Style</span><div class="styles"><button type="button" aria-label="Inside"><svg><use href="#b-in"/></svg></button><button type="button" aria-label="Centered"><svg><use href="#b-mid"/></svg></button><button type="button" class="on" aria-label="Outside"><svg><use href="#b-out"/></svg></button></div><svg class="key"><use href="#i-key"/></svg></div>
                        <hr>
                        <div class="row"><span class="label">Center</span><div class="pair"><label for="b-x">X</label><input type="text" id="b-x" value="0.5"><label for="b-y">Y</label></div><input type="text" id="b-y" value="0.5"><svg class="key"><use href="#i-key"/></svg></div>
                        <div class="row"><label for="b-width">Width</label><input type="range" id="b-width" value="50"><input type="text" value="0.5" aria-label="Width value"><svg class="key"><use href="#i-key"/></svg></div>
                        <div class="row"><label for="b-height">Height</label><input type="range" id="b-height" value="50"><input type="text" value="0.5" aria-label="Height value"><svg class="key"><use href="#i-key"/></svg></div>
                        <div class="row"><label for="b-corner">Corner Radius</label><input type="range" id="b-corner" value="0"><input type="text" value="0.0" aria-label="Corner Radius value"><svg class="key"><use href="#i-key"/></svg></div>
                        <div class="row"><label for="b-angle">Angle</label><div class="wheel"></div><input type="text" id="b-angle" value="0.0"><svg class="key"><use href="#i-key"/></svg></div>
                    </form>
                </aside>
            </main>
        </section>
    </div>
</body>
</html>
```
FILE: styles.css
```css
:root {
    --bar: #17191b;
    --head: #232227;
    --panel: #29282e;
    --line: #0c0c0d;
    --text: #929292;
    --accent: #e64b3d;
}
* {
    box-sizing: border-box;
}
body {
    margin: 0;
    background: #737373;
    color: var(--text);
    font: 18px/24px "Open Sans", "Noto Sans", sans-serif;
}
button, input, select {
    font: inherit;
    color: inherit;
    margin: 0;
    padding: 0;
    border: 0;
    background: none;
}
button {
    display: flex;
    align-items: center;
    justify-content: center;
}
svg {
    display: block;
    flex: none;
}
h1, h2 {
    margin: 0;
    font-size: 18px;
    font-weight: 600;
    line-height: 24px;
}
.sprite {
    position: absolute;
    width: 0;
    height: 0;
}
.desktop {
    display: grid;
    grid-template-columns: minmax(0, 1fr) minmax(0, 1fr);
    gap: 3px;
    min-height: 100vh;
}
.window {
    display: flex;
    flex-direction: column;
    background: var(--head);
}

/* title + menu */
.title-bar {
    display: flex;
    height: 41px;
    padding: 0 1px 4px 13px;
    align-items: center;
    background: #f3f3f3;
    color: #000;
}
.inactive .title-bar {
    color: #939393;
}
.title-bar h1 {
    flex: 1;
    font-weight: normal;
    font-size: 17px;
}
.app-icon {
    width: 20px;
    height: 20px;
    margin-right: 11px;
}
.win-btn {
    width: 70px;
    height: 36px;
}
.win-btn svg {
    width: 16px;
    height: 16px;
}
.menu-bar {
    display: flex;
    gap: 25px;
    height: 34px;
    padding: 2px 17px 0;
    background: var(--bar);
}
.menu-bar a {
    color: inherit;
    text-decoration: none;
}

/* document tabs */
.tab-bar {
    display: flex;
    justify-content: space-between;
    height: 41px;
    padding: 3px 8px 0 4px;
    background: linear-gradient(#38383d, #38383d) 0 33px / 100% 2px no-repeat;
    border-bottom: 1px solid var(--line);
}
.doc-tab {
    display: flex;
    align-items: center;
    width: 345px;
    height: 32px;
    padding: 0 9px 0 1px;
    border: 2px solid #38383d;
    border-bottom: 0;
    border-radius: 8px 8px 0 0;
    background: var(--head);
    color: #fff;
}
.doc-tab span {
    flex: 1;
    text-align: center;
}
.tab-close, .tab-close svg {
    width: 13px;
    height: 13px;
    color: #a0a0a0;
}
.tab-list {
    height: 34px;
    color: #8b8b8b;
}
.tab-list svg {
    width: 14px;
    height: 12px;
}

/* page buttons */
.page-bar {
    display: flex;
    align-items: center;
    height: 56px;
    background: var(--bar);
    border-bottom: 2px solid var(--line);
    border-left: 1px solid var(--line);
}
.page-btn {
    height: 45px;
    padding: 0 24px 0 20px;
    gap: 11px;
}
.page-btn svg {
    width: 36px;
    height: 32px;
}
.page-btn + .page-btn {
    border-left: 1px solid #404246;
}
.page-btn.only-icon {
    width: 76px;
    padding: 0;
}
.page-btn.float {
    width: 80px;
}
.page-btn.on {
    color: #fff;
}
.page-btn .warn {
    width: 20px;
    height: 20px;
    margin: 0 -3px 0 -1px;
}
.spacer {
    flex: 1;
}

.workspace {
    flex: 1;
    display: grid;
    grid-template-columns: minmax(0, 1fr) 632px;
    border: solid var(--line);
    border-width: 0 3px 0 2px;
}
.left-side {
    display: flex;
    flex-direction: column;
    min-width: 0;
}
.tool-row {
    display: flex;
    align-items: center;
    height: 77px;
    padding-left: 6px;
    border-bottom: 2px solid var(--line);
    overflow: hidden;
}
.tool-row button {
    flex: none;
    width: 60px;
    height: 60px;
}
.tool-row svg {
    width: 40px;
    height: 36px;
    opacity: 0.85;
}
.text-icon {
    width: 32px;
    height: 26px;
    background: #343438;
    color: #8c8c8e;
    font: bold 24px/27px "Liberation Serif", serif;
}
.sep {
    flex: none;
    width: 1px;
    height: 45px;
    margin: 0 8px;
    background: #404145;
}
.panes {
    flex: 1;
    display: grid;
    grid-template-columns: 607px minmax(0, 1fr);
}
.panes.wide {
    grid-template-columns: 627px minmax(0, 1fr);
}

/* viewer */
.viewer, .nodes {
    display: flex;
    flex-direction: column;
    min-width: 0;
}
.view-bar, .pane-head {
    display: flex;
    height: 36px;
    border-bottom: 2px solid var(--line);
}
.view-bar {
    overflow: hidden;
}
.view-bar svg {
    width: 28px;
    height: 20px;
}
.view-bar .tall {
    height: 26px;
}
.view-bar .square {
    width: 20px;
}
.buffer-icon {
    width: 28px;
    height: 20px;
    border: 1px solid #77777a;
    border-radius: 2px;
    background: #35353a;
    font-size: 14px;
    line-height: 18px;
}
svg.chev, .view-bar .chev {
    width: 14px;
    height: 10px;
    color: #808080;
}
.zoom {
    flex: none;
    width: 95px;
    gap: 15px;
    padding-left: 3px;
}
.view-group {
    display: flex;
    flex: none;
    align-items: center;
    gap: 14px;
    border-left: 2px solid var(--line);
}
.view-group button {
    gap: 15px;
}
.view-group.first {
    width: 154px;
    padding-left: 12px;
}
.view-group.main {
    width: 294px;
    padding-left: 8px;
    gap: 15px;
}
.view-group.main strong {
    margin-right: -5px;
    color: #fff;
    font-weight: 600;
}
.view-group.split {
    width: 55px;
    padding-left: 12px;
}
.view-bar .more {
    padding-left: 12px;
    border-left: 2px solid var(--line);
}
.view-bar .more svg, .more svg {
    width: 28px;
    height: 8px;
}
.more {
    color: #8b8b8b;
}
.stage {
    flex: 1;
    display: grid;
    background: #1a1a1a;
    overflow: hidden;
}
.frame {
    align-self: start;
    margin: 550px 0 0 30px;
    width: 555px;
}
.frame figcaption {
    height: 30px;
    font-size: 19px;
    line-height: 35px;
    text-align: right;
    color: #a8a8a8;
}
.frame.red svg {
    width: 555px;
    height: 312px;
    background: #f00;
}
.frame.black {
    width: 645px;
    margin: 506px 0 0;
}
.frame.black::after {
    content: "";
    display: block;
    height: 362px;
    background: #000;
}

/* node canvas */
.nodes {
    border-left: 2px solid var(--line);
}
.pane-head h2 {
    flex: 1;
    padding: 5px 12px;
    color: #fff;
}
.pane-head .more {
    width: 55px;
    border-left: 2px solid var(--line);
}
.focused .pane-head {
    border-bottom-color: #6e221f;
}
.canvas {
    position: relative;
    flex: 1;
    overflow: hidden;
    background-color: #29282e;
    background-image: linear-gradient(90deg, #222126 2px, transparent 2px), linear-gradient(#222126 2px, transparent 2px);
    background-size: 118px 78px;
    background-position: 9px 20px;
}
.wide .canvas {
    background-size: 124px 82px;
    background-position: 59px 28px;
}
.wires {
    position: absolute;
    inset: 0;
    width: 100%;
    height: 100%;
}
.node {
    position: absolute;
    width: 182px;
    height: 38px;
    border: 1px solid #08090a;
    border-radius: 6px;
    background: linear-gradient(#2f3136, #2f3136) 0 0 / 100% 32px no-repeat, linear-gradient(#08090a, #08090a) 0 0 / 100% 33px no-repeat, #5c9520;
    box-shadow: 0 3px 6px rgba(0, 0, 0, 0.4);
    color: #f2f2f2;
    font-size: 17px;
    line-height: 32px;
    text-align: center;
}
.node.merge {
    background-color: #8c8c8c;
}
.node.mask {
    width: 152px;
    height: 35px;
    color: #6a6a6a;
    background: linear-gradient(#151617, #151617) 0 0 / 100% 27px no-repeat, #432803;
    line-height: 28px;
}
.node.selected {
    border: 2px solid var(--accent);
}
.background2 {
    left: 391px;
    top: 549px;
}
.background1 {
    left: 156px;
    top: 627px;
}
.rectangle1 {
    left: 170px;
    top: 706px;
}
.merge1 {
    left: 391px;
    top: 705px;
}
.wide .node {
    width: 192px;
    height: 40px;
    background-size: 100% 34px, 100% 35px;
    line-height: 34px;
}
.wide .node.mask {
    width: 157px;
    height: 34px;
    line-height: 28px;
    background-size: 100% 28px;
}
.wide .background2 {
    left: 335px;
    top: 501px;
}
.wide .background1 {
    left: 87px;
    top: 584px;
}
.wide .rectangle1 {
    left: 106px;
    top: 668px;
}
.wide .merge1 {
    left: 335px;
    top: 665px;
}
.view-dots {
    position: absolute;
    left: 8px;
    top: 100%;
    display: flex;
    gap: 4px;
    width: 44px;
    padding: 4px 5px 5px;
    border: 1px solid #08090a;
    border-top: 0;
    border-radius: 0 0 6px 6px;
    background: #2f3136;
    box-shadow: 0 3px 5px rgba(0, 0, 0, 0.4);
}
.view-dots b {
    width: 8px;
    height: 8px;
    border-radius: 50%;
    background: #000;
}
.view-dots b:first-child {
    background: #fff;
}

/* inspector */
.inspector {
    border-left: 2px solid var(--line);
    background: var(--panel);
}
.inspector .pane-head {
    background: var(--head);
}
.switcher {
    display: grid;
    grid-template-columns: 1fr 1fr;
    height: 32px;
    margin: 14px 15px 19px;
    border: 1px solid #1d1d20;
    border-radius: 3px;
}
.switcher button {
    color: #46464b;
}
.switcher .on {
    background: var(--bar);
    color: #fff;
    border: 1px solid var(--line);
}
.switcher.pill {
    margin: 14px 154px 19px 150px;
    border-color: #36363c;
    border-radius: 16px;
}
.pill .on {
    margin: -1px 0;
    border-color: #46464c;
    border-radius: 16px 0 0 16px;
    color: var(--accent);
}
.tool-head {
    display: flex;
    align-items: center;
    height: 42px;
    padding: 0 27px 4px 23px;
    border-bottom: 2px solid var(--line);
}
.tool-head label {
    flex: 1;
    padding-left: 15px;
}
.toggle {
    appearance: none;
    width: 36px;
    height: 20px;
    border-radius: 10px;
    background: radial-gradient(circle at 11px 10px, #959595 6px, transparent 7px) #18181a;
}
.swatch {
    width: 16px;
    height: 16px;
    margin-right: 12px;
    border: 1px solid #111;
    border-radius: 50%;
    background: #a36a00;
}
.head-icons {
    display: flex;
    gap: 18px;
    height: 31px;
    margin-left: 17px;
    padding-left: 19px;
    border-left: 2px solid #141416;
}
.head-icons svg {
    width: 24px;
    height: 24px;
}
.sub-tabs {
    display: flex;
    justify-content: center;
    gap: 11px;
    height: 45px;
    background: var(--head);
    border-bottom: 2px solid var(--line);
    font-size: 16px;
}
.sub-tabs button {
    padding: 0 13px;
    border-bottom: 3px solid transparent;
}
.sub-tabs .on {
    color: #fff;
    border-color: var(--accent);
}
.controls {
    padding: 6px 0 13px;
    border-bottom: 2px solid var(--line);
    color: #b9b9b9;
    font-size: 16px;
}
.row {
    display: grid;
    grid-template-columns: 220px minmax(0, 1fr) 82px 75px;
    column-gap: 15px;
    align-items: center;
    height: 34px;
    margin-top: 3px;
}
.row:nth-child(even) {
    margin-top: 4px;
}
.row > label, .row > .label {
    text-align: right;
}
.row input[type="text"] {
    width: 82px;
    height: 30px;
    border: 1px solid #0c0c0d;
    border-radius: 4px;
    background: #1f1f1f;
    color: #f0f0f0;
    text-align: center;
}
.row input[type="range"] {
    appearance: none;
    width: auto;
    height: 16px;
    margin: 0 2px;
    background: linear-gradient(#18181a, #18181a) 0 5px / 100% 6px no-repeat;
}
.row input[type="range"]::-webkit-slider-thumb {
    appearance: none;
    width: 15px;
    height: 15px;
    border: 1px solid #1b1b1d;
    border-radius: 50%;
    background: #8f8f8f;
}
.row > .key {
    grid-column: 4;
    margin-left: 15px;
}
.key {
    width: 16px;
    height: 16px;
}
.drop {
    grid-column: 2 / 4;
    display: grid;
    align-items: center;
}
.drop select, .drop .chev {
    grid-area: 1 / 1;
}
.drop select {
    appearance: none;
    height: 30px;
    padding-left: 13px;
    border: 1px solid #0c0c0d;
    border-radius: 4px;
    background: #1f1f1f;
    color: #f0f0f0;
}
.drop .chev {
    justify-self: end;
    margin-right: 11px;
    pointer-events: none;
}
.checks {
    grid-column: 2 / 4;
    display: flex;
    align-items: center;
}
.checks input {
    appearance: none;
    width: 24px;
    height: 24px;
    margin-right: 14px;
    border: 1px solid #0c0c0d;
    border-radius: 3px;
    background: #1f1f1f;
}
.checks input:checked::before {
    content: "";
    display: block;
    width: 7px;
    height: 15px;
    margin: 1px 0 0 8px;
    border: solid #fff;
    border-width: 0 3px 3px 0;
    transform: rotate(35deg);
}
.checks .mid {
    margin: 0 29px 0 auto;
}
.checks .mid ~ label {
    width: 77px;
}
.styles {
    display: flex;
    gap: 20px;
    padding-left: 10px;
    color: #888;
}
.styles svg {
    width: 20px;
    height: 26px;
}
.styles .on svg {
    width: 24px;
}
.styles .on {
    margin-left: -4px;
    color: #fff;
}
.controls hr {
    height: 2px;
    margin: 11px 23px 9px;
    border: 0;
    background: var(--line);
}
.pair {
    display: flex;
    align-items: center;
    gap: 15px;
    padding-left: 3px;
}
.pair label:last-child {
    margin-left: auto;
}
.wheel {
    height: 22px;
    background: linear-gradient(90deg, #1a1b1c 5%, transparent 45%, transparent 55%, #1a1b1c 95%), linear-gradient(#2b2b30 0 6px, transparent 6px 16px, #2b2b30 16px), repeating-linear-gradient(90deg, #a8a8a8 0 3px, #222 3px 6px);
}
```
